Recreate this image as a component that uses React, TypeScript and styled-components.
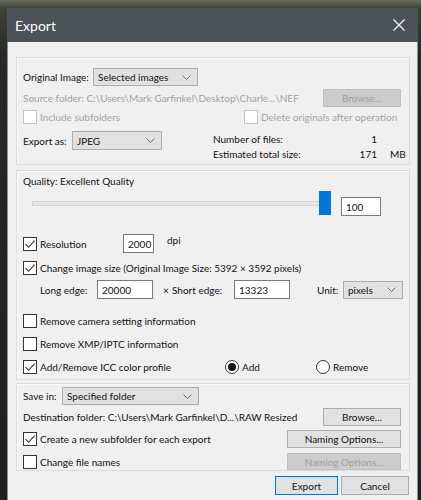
import * as React from 'react';
import styled, { createGlobalStyle } from 'styled-components';

const GlobalStyle = createGlobalStyle`
  html, body {
    margin: 0;
    padding: 0;
  }
  body {
    width: 421px;
    height: 500px;
    overflow: hidden;
    font-family: 'Lato', 'Noto Sans', sans-serif;
    font-size: 10px;
    color: #111;
  }
`;

const Desktop = styled.div`
  height: 500px;
  box-sizing: border-box;
  padding: 8px 3px 0 7px;
  background: linear-gradient(180deg, #6a6e5e 0px, #3e4237 8px, #262923 60px, #1d201c 100%);
`;

const Window = styled.div`
  height: 100%;
  display: flex;
  flex-direction: column;
  background: #f0f0f0;
  border-left: 1px solid #8a8f93;
  border-right: 1px solid #8a8f93;
`;

const TitleBar = styled.div`
  height: 34px;
  flex-shrink: 0;
  display: flex;
  align-items: center;
  justify-content: space-between;
  padding: 0 13px 0 8px;
  margin: 0 -1px;
  background: #4b5358;
  color: #fff;
  font-size: 14px;
`;

const Body = styled.div`
  display: flex;
  flex-direction: column;
  padding: 15px 7px 0 8px;
`;

const Group = styled.div<{ $h: number; $mt?: number }>`
  height: ${(p) => p.$h}px;
  margin-top: ${(p) => p.$mt || 0}px;
  box-sizing: border-box;
  border: 1px solid #dcdcdc;
  box-shadow: inset 1px 1px 0 #fafafa;
  padding: 0 8px 0 6px;
  display: flex;
  flex-direction: column;
`;

const Row = styled.div<{ $h: number; $mt: number; $pl?: number; $top?: boolean }>`
  display: flex;
  align-items: ${(p) => (p.$top ? 'flex-start' : 'center')};
  height: ${(p) => p.$h}px;
  margin-top: ${(p) => p.$mt}px;
  padding-left: ${(p) => p.$pl || 0}px;
  white-space: nowrap;
`;

const Label = styled.span<{ $w?: number; $muted?: boolean }>`
  flex-shrink: 0;
  width: ${(p) => (p.$w ? `${p.$w}px` : 'auto')};
  color: ${(p) => (p.$muted ? '#a2a2a2' : '#111')};
`;

const Select = styled.div<{ $w: number; $h: number }>`
  width: ${(p) => p.$w}px;
  height: ${(p) => p.$h}px;
  box-sizing: border-box;
  flex-shrink: 0;
  display: flex;
  align-items: center;
  justify-content: space-between;
  padding: 0 6px 0 4px;
  background: #e1e1e1;
  border: 1px solid #adadad;
`;

const TextBox = styled.div<{ $w: number; $h: number; $mt?: number; $ml?: number }>`
  width: ${(p) => p.$w}px;
  height: ${(p) => p.$h}px;
  margin-top: ${(p) => p.$mt || 0}px;
  margin-left: ${(p) => p.$ml || 0}px;
  box-sizing: border-box;
  flex-shrink: 0;
  display: flex;
  align-items: center;
  padding-left: 4px;
  background: #fff;
  border: 1px solid #7a7a7a;
`;

const Button = styled.button<{ $w: number; $h: number; $primary?: boolean }>`
  width: ${(p) => p.$w}px;
  height: ${(p) => p.$h}px;
  flex-shrink: 0;
  margin: 0 0 0 auto;
  padding: 0;
  font: inherit;
  color: #111;
  background: #e1e1e1;
  border: 1px solid ${(p) => (p.$primary ? '#0078d7' : '#adadad')};
  box-shadow: ${(p) => (p.$primary ? 'inset 0 0 0 1px #cce4f7' : 'none')};

  &:disabled {
    color: #a0a0a0;
    background: #cccccc;
    border-color: #bfbfbf;
  }
`;

const Box = styled.span<{ $disabled?: boolean }>`
  width: 14px;
  height: 14px;
  box-sizing: border-box;
  flex-shrink: 0;
  display: flex;
  align-items: center;
  justify-content: center;
  background: #fff;
  border: 1px solid ${(p) => (p.$disabled ? '#c4c4c4' : '#333')};
`;

const CheckItem = styled.label<{ $w?: number }>`
  display: flex;
  align-items: center;
  gap: 3px;
  width: ${(p) => (p.$w ? `${p.$w}px` : 'auto')};
  flex-shrink: 0;
`;

const Circle = styled.span`
  width: 14px;
  height: 14px;
  box-sizing: border-box;
  border-radius: 50%;
  display: flex;
  align-items: center;
  justify-content: center;
  background: #fff;
  border: 1px solid #333;
`;

const Dot = styled.span`
  width: 8px;
  height: 8px;
  border-radius: 50%;
  background: #111;
`;

const RadioGroup = styled.div`
  display: flex;
  align-items: center;
  height: 14px;
`;

const Track = styled.div`
  flex: 0 0 285px;
  height: 3px;
  background: #e7e7e7;
  border: 1px solid #d6d6d6;
`;

const Thumb = styled.div`
  width: 12px;
  height: 24px;
  flex-shrink: 0;
  background: #0078d7;
`;

const Sub = styled.span<{ $ml?: number; $w?: number }>`
  flex-shrink: 0;
  margin-left: ${(p) => p.$ml || 0}px;
  width: ${(p) => (p.$w ? `${p.$w}px` : 'auto')};
`;

const Info = styled.div`
  display: grid;
  grid-template-columns: 110px 41px auto;
  column-gap: 13px;
  line-height: 15px;
  padding-top: 1px;
`;

const Value = styled.span`
  text-align: right;
`;

const Footer = styled.div`
  display: flex;
  justify-content: flex-end;
  gap: 3px;
  margin-top: 5px;
  padding-right: 1px;

  & > button {
    margin: 0;
  }
`;

const Chevron = () => (
  <svg width="9" height="5" viewBox="0 0 9 5">
    <path d="M0.5 0.5L4.5 4.5L8.5 0.5" fill="none" stroke="#6a6a6a" strokeWidth="1" />
  </svg>
);

const Dropdown = ({ w, h, value }: { w: number; h: number; value: string }) => (
  <Select $w={w} $h={h}>
    <span>{value}</span>
    <Chevron />
  </Select>
);

const Checkbox = ({
  checked,
  disabled,
  w,
  children,
}: {
  checked?: boolean;
  disabled?: boolean;
  w?: number;
  children: React.ReactNode;
}) => (
  <CheckItem $w={w}>
    <Box $disabled={disabled}>
      {checked && (
        <svg width="12" height="12" viewBox="0 0 12 12">
          <path d="M1.5 6.2L4.6 9.3L10.6 2.6" fill="none" stroke="#333" strokeWidth="1.1" />
        </svg>
      )}
    </Box>
    <Label $muted={disabled}>{children}</Label>
  </CheckItem>
);

const Radio = ({ selected, w, children }: { selected?: boolean; w?: number; children: string }) => (
  <CheckItem $w={w}>
    <Circle>{selected && <Dot />}</Circle>
    <Label>{children}</Label>
  </CheckItem>
);

export default function App() {
  return (
    <Desktop>
      <GlobalStyle />
      <Window>
        <TitleBar>
          <span>Export</span>
          <svg width="12" height="12" viewBox="0 0 12 12">
            <path d="M0.5 0.5L11.5 11.5M11.5 0.5L0.5 11.5" stroke="#fff" strokeWidth="1.1" />
          </svg>
        </TitleBar>

        <Body>
          <Group $h={108}>
            <Row $h={18} $mt={10}>
              <Label $w={70}>Original Image:</Label>
              <Dropdown w={105} h={18} value="Selected images" />
            </Row>
            <Row $h={18} $mt={3}>
              <Label $muted>Source folder: C:\Users\Mark Garfinkel\Desktop\Charle...\NEF</Label>
              <Button $w={78} $h={18} disabled>
                Browse...
              </Button>
            </Row>
            <Row $h={14} $mt={3}>
              <Checkbox w={221} disabled>
                Include subfolders
              </Checkbox>
              <Checkbox disabled>Delete originals after operation</Checkbox>
            </Row>
            <Row $h={19} $mt={7} $top>
              <Sub $w={190}>
                <Row $h={19} $mt={0}>
                  <Label $w={49}>Export as:</Label>
                  <Dropdown w={90} h={19} value="JPEG" />
                </Row>
              </Sub>
              <Info>
                <span>Number of files:</span>
                <Value>1</Value>
                <span />
                <span>Estimated total size:</span>
                <Value>171</Value>
                <span>MB</span>
              </Info>
            </Row>
          </Group>

          <Group $h={210} $mt={5}>
            <Row $h={14} $mt={3}>
              <Label>Quality: Excellent Quality</Label>
            </Row>
            <Row $h={24} $mt={3} $pl={9}>
              <Track />
              <Thumb />
              <TextBox $w={40} $h={19} $mt={7} $ml={10}>
                100
              </TextBox>
            </Row>
            <Row $h={19} $mt={19}>
              <Checkbox w={100} checked>
                Resolution
              </Checkbox>
              <TextBox $w={31} $h={19}>
                2000
              </TextBox>
              <Sub $ml={13} style={{ alignSelf: 'flex-start' }}>
                dpi
              </Sub>
            </Row>
            <Row $h={14} $mt={8}>
              <Checkbox checked>Change image size (Original Image Size: 5392 × 3592 pixels)</Checkbox>
            </Row>
            <Row $h={19} $mt={5} $pl={17}>
              <Label $w={57}>Long edge:</Label>
              <TextBox $w={56} $h={19}>
                20000
              </TextBox>
              <Sub $ml={10} $w={9}>
                ×
              </Sub>
              <Label $w={62}>Short edge:</Label>
              <TextBox $w={56} $h={19}>
                13323
              </TextBox>
              <Sub $ml={27} $w={26}>
                Unit:
              </Sub>
              <Dropdown w={60} h={18} value="pixels" />
            </Row>
            <Row $h={14} $mt={15}>
              <Checkbox>Remove camera setting information</Checkbox>
            </Row>
            <Row $h={14} $mt={9}>
              <Checkbox>Remove XMP/IPTC information</Checkbox>
            </Row>
            <Row $h={14} $mt={9}>
              <Checkbox w={202} checked>
                Add/Remove ICC color profile
              </Checkbox>
              <RadioGroup>
                <Radio w={91} selected>
                  Add
                </Radio>
                <Radio>Remove</Radio>
              </RadioGroup>
            </Row>
          </Group>

          <Group $h={88} $mt={3}>
            <Row $h={18} $mt={3}>
              <Label $w={39}>Save in:</Label>
              <Dropdown w={137} h={18} value="Specified folder" />
            </Row>
            <Row $h={18} $mt={3}>
              <Label>Destination folder: C:\Users\Mark Garfinkel\D...\RAW Resized</Label>
              <Button $w={78} $h={18}>
                Browse...
              </Button>
            </Row>
            <Row $h={18} $mt={4}>
              <Checkbox checked>Create a new subfolder for each export</Checkbox>
              <Button $w={114} $h={18}>
                Naming Options...
              </Button>
            </Row>
            <Row $h={17} $mt={5}>
              <Checkbox>Change file names</Checkbox>
              <Button $w={114} $h={17} disabled>
                Naming Options...
              </Button>
            </Row>
          </Group>

          <Footer>
            <Button $w={63} $h={19} $primary>
              Export
            </Button>
            <Button $w={68} $h={19}>
              Cancel
            </Button>
          </Footer>
        </Body>
      </Window>
    </Desktop>
  );
}
